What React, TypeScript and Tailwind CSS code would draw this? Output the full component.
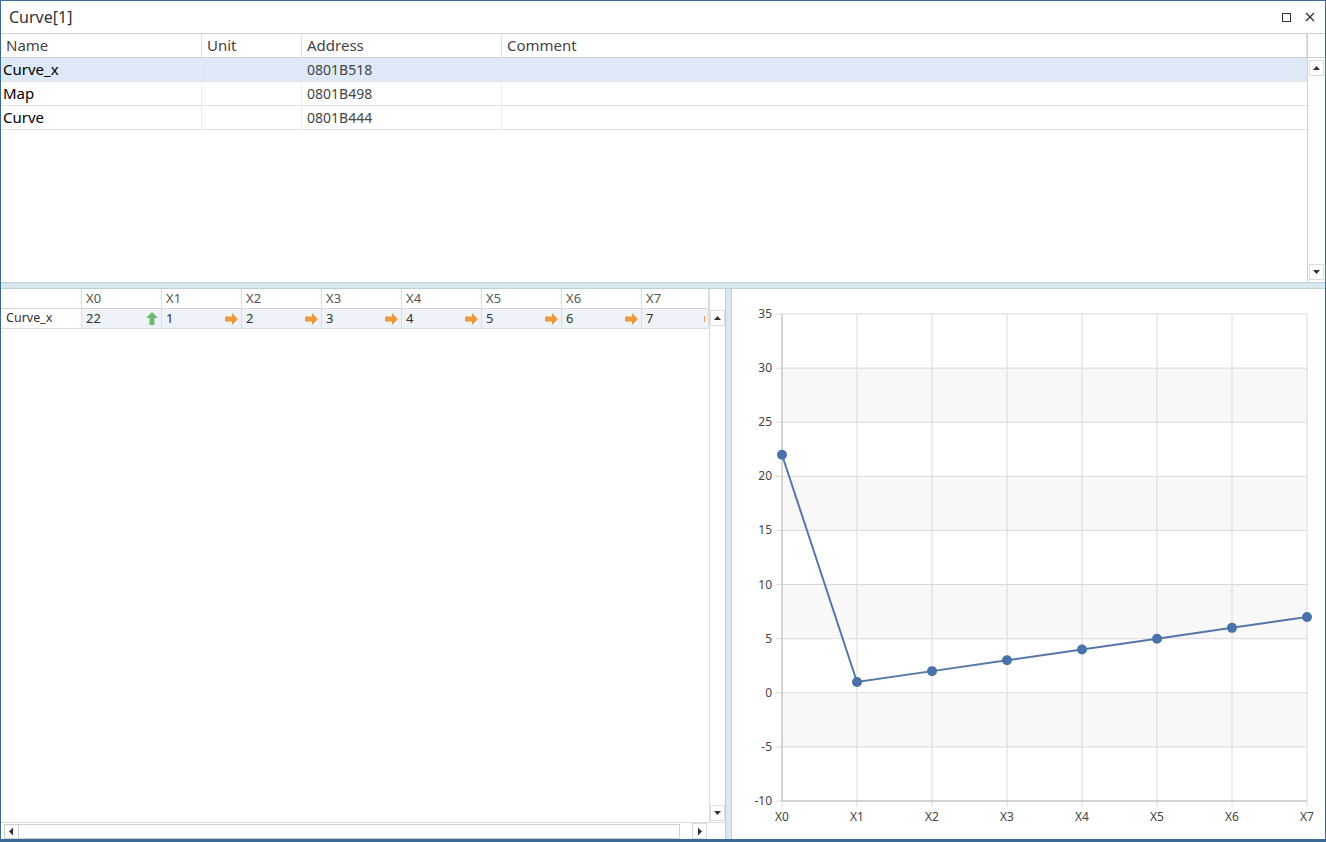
import React from "react";

const topCols = [
  { name: "Name", w: 201 },
  { name: "Unit", w: 100 },
  { name: "Address", w: 200 },
  { name: "Comment", w: 805 },
];

const topRows = [
  { name: "Curve_x", address: "0801B518", selected: true },
  { name: "Map", address: "0801B498", selected: false },
  { name: "Curve", address: "0801B444", selected: false },
];

const values = [22, 1, 2, 3, 4, 5, 6, 7];

function ArrowUp() {
  return (
    <svg width="12" height="13" viewBox="0 0 12 13">
      <path d="M6 0 L12 6 H8.5 V13 H3.5 V6 H0 Z" fill="#6dbb6f" />
    </svg>
  );
}

function ArrowRight() {
  return (
    <svg width="13" height="12" viewBox="0 0 13 12">
      <path d="M13 6 L7 0 V3.5 H0 V8.5 H7 V12 Z" fill="#eb9a3a" />
    </svg>
  );
}

function ScrollBtn({ dir }: { dir: "up" | "down" | "left" | "right" }) {
  const paths = {
    up: "M1 5 L4.5 1 L8 5 Z",
    down: "M1 1 L8 1 L4.5 5 Z",
    left: "M5 0.5 L5 8.5 L1 4.5 Z",
    right: "M2 0.5 L2 8.5 L6 4.5 Z",
  };
  const vertical = dir === "up" || dir === "down";
  return (
    <div className="flex h-[16px] w-[15px] items-center justify-center border border-[#dcdcdc] bg-white">
      <svg width={vertical ? 9 : 7} height={vertical ? 6 : 9} viewBox={vertical ? "0 0 9 6" : "0 0 7 9"}>
        <path d={paths[dir]} fill="#333" />
      </svg>
    </div>
  );
}

function Chart() {
  const left = 50;
  const right = 575;
  const top = 25;
  const bottom = 512;
  const stepY = (bottom - top) / 9;
  const stepX = (right - left) / 7;
  const yOf = (v: number) => top + ((35 - v) / 5) * stepY;
  const ticks = [35, 30, 25, 20, 15, 10, 5, 0, -5, -10];
  const bands = [30, 20, 10, 0];
  const pts = values.map((v, i) => [left + i * stepX, yOf(v)]);

  return (
    <svg width="590" height="549" className="block">
      {bands.map((b) => (
        <rect key={b} x={left} y={yOf(b)} width={right - left} height={stepY} fill="#f8f8f8" />
      ))}
      {ticks.map((t) => (
        <g key={t}>
          <line x1={left - 6} x2={right} y1={yOf(t)} y2={yOf(t)} stroke="#dadada" />
          <text
            x={left - 10}
            y={yOf(t) + 4}
            textAnchor="end"
            fontSize="12"
            fill="#444"
            fontFamily="Noto Sans, sans-serif"
          >
            {t}
          </text>
        </g>
      ))}
      {values.map((_, i) => (
        <g key={i}>
          <line
            x1={left + i * stepX}
            x2={left + i * stepX}
            y1={top}
            y2={bottom + 6}
            stroke="#dadada"
          />
          <text
            x={left + i * stepX}
            y={bottom + 20}
            textAnchor="middle"
            fontSize="12"
            fill="#444"
            fontFamily="Noto Sans, sans-serif"
          >
            X{i}
          </text>
        </g>
      ))}
      <line x1={left} x2={left} y1={top} y2={bottom} stroke="#bdbdbd" />
      <line x1={left} x2={right} y1={bottom} y2={bottom} stroke="#bdbdbd" />
      <polyline
        points={pts.map((p) => p.join(",")).join(" ")}
        fill="none"
        stroke="#5577a8"
        strokeWidth="2"
      />
      {pts.map((p, i) => (
        <circle key={i} cx={p[0]} cy={p[1]} r="5" fill="#4a72aa" />
      ))}
    </svg>
  );
}

export default function App() {
  return (
    <div className="flex h-[842px] w-[1326px] flex-col overflow-hidden border border-b-[3px] border-[#3a6a95] bg-white font-['Noto_Sans',sans-serif] text-[#222]">
      {/* title bar */}
      <div className="flex h-[32px] shrink-0 items-center justify-between pl-[8px] pr-[10px]">
        <span className="text-[16px] text-[#333]">Curve[1]</span>
        <div className="flex items-center gap-[14px]">
          <div className="h-[9px] w-[9px] border border-[#333]" />
          <svg width="10" height="10" viewBox="0 0 10 10">
            <path d="M1 1 L9 9 M9 1 L1 9" stroke="#333" strokeWidth="1.4" />
          </svg>
        </div>
      </div>

      {/* top grid */}
      <div className="flex h-[249px] shrink-0 border-t border-[#cfcfcf]">
        <div className="flex w-[1306px] flex-col">
          <div className="flex h-[24px] border-b border-[#cfcfcf]">
            {topCols.map((c) => (
              <div
                key={c.name}
                style={{ width: c.w }}
                className="flex items-center border-r border-[#dcdcdc] pl-[5px] text-[15px] text-[#444]"
              >
                {c.name}
              </div>
            ))}
          </div>
          {topRows.map((r) => (
            <div
              key={r.name}
              className={`flex h-[24px] border-b border-[#e3e3e3] ${r.selected ? "bg-[#dde9f6]" : "bg-white"}`}
            >
              <div className="flex w-[201px] items-center border-r border-[#ececec] pl-[2px] text-[15px] text-black">
                {r.name}
              </div>
              <div className="w-[100px] border-r border-[#ececec]" />
              <div className="flex w-[200px] items-center border-r border-[#ececec] pl-[5px] text-[14px] text-[#444]">
                {r.address}
              </div>
              <div className="flex-1" />
            </div>
          ))}
        </div>
        <div className="flex flex-1 flex-col border-l border-[#cfcfcf]">
          <div className="h-[24px] border-b border-[#cfcfcf]" />
          <div className="flex flex-1 flex-col items-center justify-between py-[2px]">
            <ScrollBtn dir="up" />
            <ScrollBtn dir="down" />
          </div>
        </div>
      </div>

      {/* horizontal splitter */}
      <div className="h-[7px] shrink-0 border-y border-[#bcd0da] bg-[#d9e8ef]" />

      {/* bottom area */}
      <div className="flex min-h-0 flex-1">
        {/* data grid */}
        <div className="flex w-[724px] flex-col">
          <div className="flex min-h-0 flex-1">
            <div className="flex w-[708px] flex-col">
              <div className="flex h-[20px] border-b border-[#d4d4d4]">
                <div className="w-[81px] border-r border-[#dcdcdc]" />
                {values.map((_, i) => (
                  <div
                    key={i}
                    className={`flex items-center border-r border-[#dcdcdc] pl-[4px] text-[13px] text-[#555] ${i === 7 ? "w-[67px]" : "w-[80px]"}`}
                  >
                    X{i}
                  </div>
                ))}
              </div>
              <div className="flex h-[20px] border-b border-[#dedede]">
                <div className="flex w-[81px] items-center border-r border-[#dcdcdc] pl-[5px] text-[12.5px] text-[#333]">
                  Curve_x
                </div>
                {values.map((v, i) => (
                  <div
                    key={i}
                    className={`flex items-center justify-between border-r border-[#dcdcdc] bg-[#eef3fa] pl-[4px] pr-[3px] text-[13px] text-[#333] ${i === 7 ? "w-[67px]" : "w-[80px]"}`}
                  >
                    <span>{v}</span>
                    {i === 0 ? <ArrowUp /> : i < 7 ? <ArrowRight /> : <span className="h-[6px] w-[1px] bg-[#e3a65a]" />}
                  </div>
                ))}
              </div>
            </div>
            <div className="flex flex-1 flex-col items-center justify-between border-l border-[#dcdcdc] pt-[21px] pb-[1px]">
              <ScrollBtn dir="up" />
              <ScrollBtn dir="down" />
            </div>
          </div>
          <div className="flex h-[17px] shrink-0 items-center gap-[12px] border-t border-[#dcdcdc] pl-[3px] pr-[18px]">
            <div className="flex h-[15px] w-[677px] border border-[#cfcfcf]">
              <div className="flex w-[14px] items-center justify-center border-r border-[#cfcfcf]">
                <svg width="7" height="9" viewBox="0 0 7 9">
                  <path d="M5 0.5 L5 8.5 L1 4.5 Z" fill="#333" />
                </svg>
              </div>
            </div>
            <ScrollBtn dir="right" />
          </div>
        </div>

        {/* vertical splitter */}
        <div className="w-[7px] shrink-0 border-x border-[#bcd0da] bg-[#d9e8ef]" />

        {/* chart */}
        <div className="min-w-0 flex-1 overflow-hidden bg-white">
          <Chart />
        </div>
      </div>
    </div>
  );
}
